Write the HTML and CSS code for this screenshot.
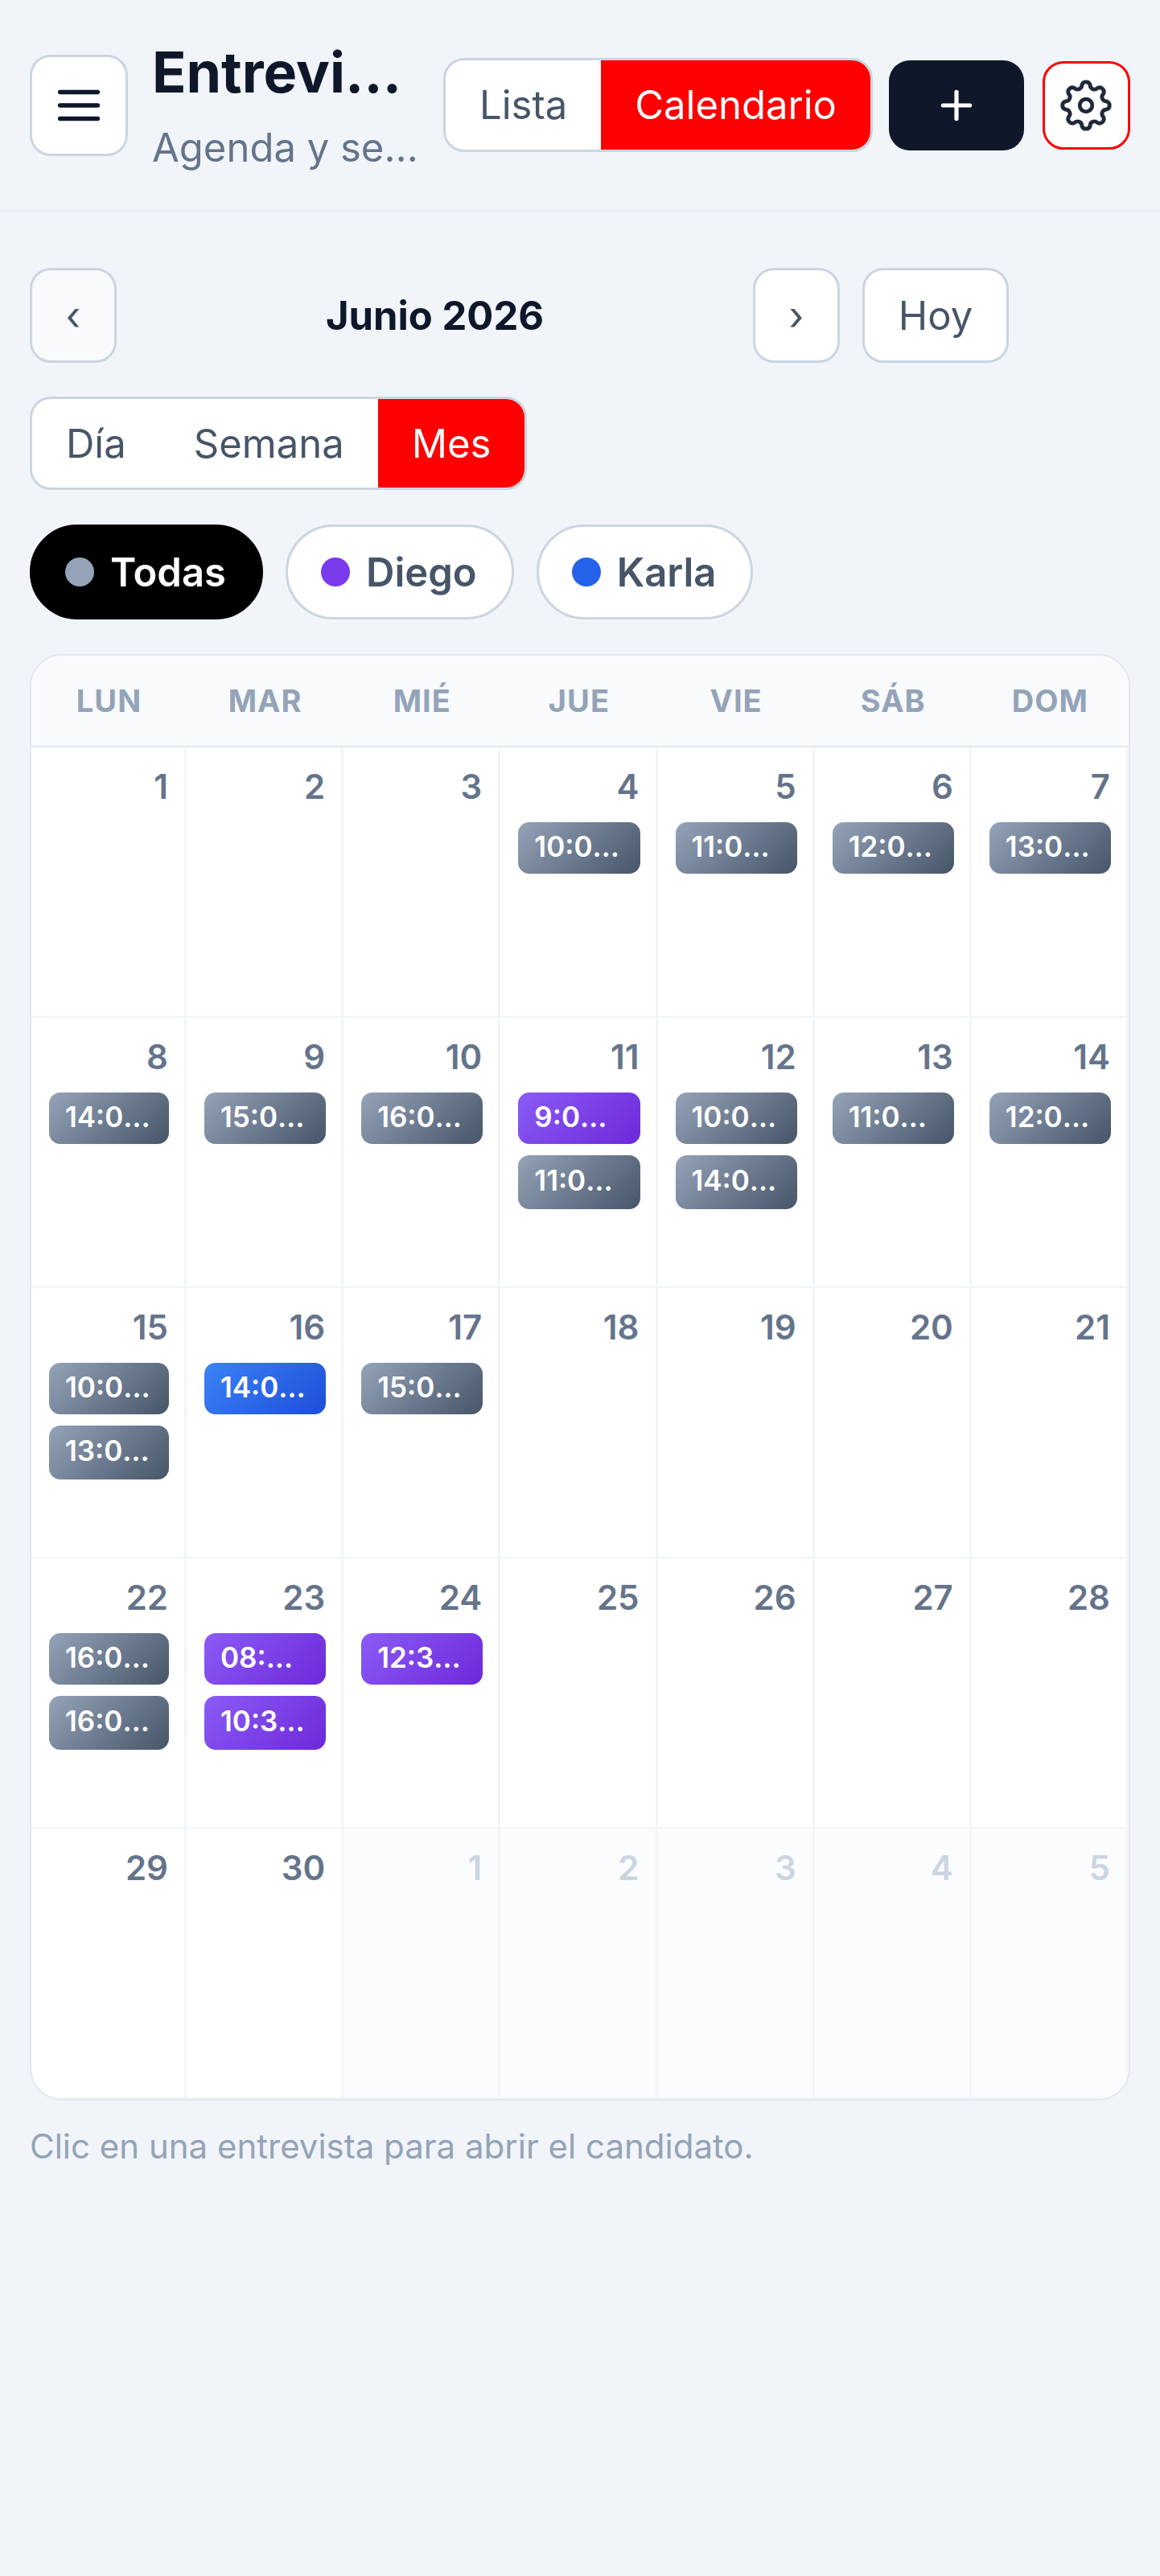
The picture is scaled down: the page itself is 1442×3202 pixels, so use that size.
FILE: index.html
```
<!DOCTYPE html>
<html lang="es">
<head>
<meta charset="utf-8">
<title>Entrevistas</title>
<link rel="stylesheet" href="styles.css">
</head>
<body>
<header class="topbar">
  <button class="menu-btn" aria-label="Menú">
    <svg class="menu-icon" viewBox="0 0 24 24"><path d="M3.5 6h17M3.5 12h17M3.5 18h17"/></svg>
  </button>
  <div class="title-col">
    <h1 class="title">Entrevistas</h1>
    <p class="subtitle">Agenda y seguimiento</p>
  </div>
  <div class="seg seg-top">
    <span class="seg-item">Lista</span>
    <span class="seg-item active">Calendario</span>
  </div>
  <button class="add-btn" aria-label="Añadir">
    <svg class="plus-icon" viewBox="0 0 24 24"><path d="M12 3.7v16.6M3.7 12h16.6"/></svg>
  </button>
  <button class="gear-btn" aria-label="Ajustes">
    <svg class="gear-icon" viewBox="0 0 24 24"><path d="M10.3 3.47A1.8 1.8 0 0 1 13.7 3.47A1.8 1.8 0 0 0 16.83 4.77A1.8 1.8 0 0 1 19.23 7.17A1.8 1.8 0 0 0 20.53 10.3A1.8 1.8 0 0 1 20.53 13.7A1.8 1.8 0 0 0 19.23 16.83A1.8 1.8 0 0 1 16.83 19.23A1.8 1.8 0 0 0 13.7 20.53A1.8 1.8 0 0 1 10.3 20.53A1.8 1.8 0 0 0 7.17 19.23A1.8 1.8 0 0 1 4.77 16.83A1.8 1.8 0 0 0 3.47 13.7A1.8 1.8 0 0 1 3.47 10.3A1.8 1.8 0 0 0 4.77 7.17A1.8 1.8 0 0 1 7.17 4.77A1.8 1.8 0 0 0 10.3 3.47Z"/><circle cx="12" cy="12" r="2.6"/></svg>
  </button>
</header>
<main class="content">
  <div class="nav-row">
    <button class="nav-btn arrow prev">‹</button>
    <div class="month">Junio 2026</div>
    <button class="nav-btn arrow">›</button>
    <button class="nav-btn today">Hoy</button>
  </div>
  <div class="seg seg-view">
    <span class="seg-item">Día</span>
    <span class="seg-item">Semana</span>
    <span class="seg-item active">Mes</span>
  </div>
  <div class="chips">
    <span class="chip chip-on"><i class="dot dot-all"></i>Todas</span>
    <span class="chip"><i class="dot dot-diego"></i>Diego</span>
    <span class="chip"><i class="dot dot-karla"></i>Karla</span>
  </div>
  <section class="calendar">
    <div class="weekdays">
      <div>LUN</div><div>MAR</div><div>MIÉ</div><div>JUE</div><div>VIE</div><div>SÁB</div><div>DOM</div>
    </div>
    <div class="days">
      <div class="day"><div class="num">1</div></div>
      <div class="day"><div class="num">2</div></div>
      <div class="day"><div class="num">3</div></div>
      <div class="day"><div class="num">4</div><a class="ev ev-gray">10:00 Entrevista</a></div>
      <div class="day"><div class="num">5</div><a class="ev ev-gray">11:00 Entrevista</a></div>
      <div class="day"><div class="num">6</div><a class="ev ev-gray">12:00 Entrevista</a></div>
      <div class="day"><div class="num">7</div><a class="ev ev-gray">13:00 Entrevista</a></div>

      <div class="day"><div class="num">8</div><a class="ev ev-gray">14:00 Entrevista</a></div>
      <div class="day"><div class="num">9</div><a class="ev ev-gray">15:00 Entrevista</a></div>
      <div class="day"><div class="num">10</div><a class="ev ev-gray">16:00 Entrevista</a></div>
      <div class="day"><div class="num">11</div><a class="ev ev-purple">9:00 Entrevista</a><a class="ev ev-gray">11:00 Entrevista</a></div>
      <div class="day"><div class="num">12</div><a class="ev ev-gray">10:00 Entrevista</a><a class="ev ev-gray">14:00 Entrevista</a></div>
      <div class="day"><div class="num">13</div><a class="ev ev-gray">11:00 Entrevista</a></div>
      <div class="day"><div class="num">14</div><a class="ev ev-gray">12:00 Entrevista</a></div>

      <div class="day"><div class="num">15</div><a class="ev ev-gray">10:00 Entrevista</a><a class="ev ev-gray">13:00 Entrevista</a></div>
      <div class="day"><div class="num">16</div><a class="ev ev-blue">14:00 Entrevista</a></div>
      <div class="day"><div class="num">17</div><a class="ev ev-gray">15:00 Entrevista</a></div>
      <div class="day"><div class="num">18</div></div>
      <div class="day"><div class="num">19</div></div>
      <div class="day"><div class="num">20</div></div>
      <div class="day"><div class="num">21</div></div>

      <div class="day"><div class="num">22</div><a class="ev ev-gray">16:00 Entrevista</a><a class="ev ev-gray">16:00 Entrevista</a></div>
      <div class="day"><div class="num">23</div><a class="ev ev-purple">08:00 Entrevista</a><a class="ev ev-purple">10:30 Entrevista</a></div>
      <div class="day"><div class="num">24</div><a class="ev ev-purple">12:30 Entrevista</a></div>
      <div class="day"><div class="num">25</div></div>
      <div class="day"><div class="num">26</div></div>
      <div class="day"><div class="num">27</div></div>
      <div class="day"><div class="num">28</div></div>

      <div class="day"><div class="num">29</div></div>
      <div class="day"><div class="num">30</div></div>
      <div class="day out"><div class="num">1</div></div>
      <div class="day out"><div class="num">2</div></div>
      <div class="day out"><div class="num">3</div></div>
      <div class="day out"><div class="num">4</div></div>
      <div class="day out"><div class="num">5</div></div>
    </div>
  </section>
  <p class="hint">Clic en una entrevista para abrir el candidato.</p>
</main>
</body>
</html>
```
FILE: styles.css
```
* { box-sizing: border-box; }
html, body { margin: 0; padding: 0; }
body {
  width: 1442px;
  min-height: 3202px;
  background: #f1f5f9;
  font-family: Inter, "Liberation Sans", sans-serif;
  color: #0f172a;
}
button { font-family: inherit; margin: 0; padding: 0; cursor: pointer; }

.topbar {
  display: flex;
  align-items: center;
  gap: 28px;
  height: 263px;
  padding: 0 36px 0 37px;
  border-bottom: 2px solid #e9eef5;
}
.menu-btn {
  flex: none;
  width: 122px;
  height: 126px;
  background: #fff;
  border: 3px solid #cbd5e1;
  border-radius: 26px;
  display: flex;
  align-items: center;
  justify-content: center;
}
.menu-icon { width: 66px; height: 66px; fill: none; stroke: #0f172a; stroke-width: 2; stroke-linecap: round; }
.title-col { flex: none; width: 334px; margin-left: 2px; }
.title {
  margin: 0;
  font-size: 70px;
  line-height: 84px;
  font-weight: 700;
  overflow: hidden;
  white-space: nowrap;
  text-overflow: ellipsis;
}
.subtitle {
  margin: 23px 0 0;
  font-size: 49px;
  line-height: 58px;
  color: #64748b;
  overflow: hidden;
  white-space: nowrap;
  text-overflow: ellipsis;
}
.seg {
  display: flex;
  width: fit-content;
  background: #fff;
  border: 3px solid #cbd5e1;
  border-radius: 26px;
  overflow: hidden;
}
.seg-item {
  display: flex;
  align-items: center;
  font-size: 49px;
  color: #475569;
}
.seg-item.active { background: #f00; color: #fff; }
.seg-top { flex: none; height: 117px; }
.seg-top .seg-item { padding: 0 42px; }
.add-btn {
  flex: none;
  width: 168px;
  height: 112px;
  margin-left: -8px;
  background: #0f172a;
  border: 0;
  border-radius: 26px;
  display: flex;
  align-items: center;
  justify-content: center;
}
.plus-icon { width: 48px; height: 48px; fill: none; stroke: #fff; stroke-width: 2.6; stroke-linecap: round; }
.gear-btn {
  flex: none;
  width: 109px;
  height: 110px;
  margin-left: -5px;
  background: #fff;
  border: 3px solid #f00;
  border-radius: 26px;
  display: flex;
  align-items: center;
  justify-content: center;
}
.gear-icon { width: 72px; height: 72px; fill: none; stroke: #1e293b; stroke-width: 1.6; stroke-linecap: round; stroke-linejoin: round; }

.content { padding: 70px 37px 0; }
.nav-row { display: flex; align-items: center; gap: 28px; width: 1217px; }
.nav-btn {
  flex: none;
  height: 118px;
  background: #fff;
  border: 3px solid #cbd5e1;
  border-radius: 26px;
  font-size: 49px;
  color: #475569;
}
.nav-btn.prev { background: #f8fafc; }
.nav-btn.arrow { width: 108px; }
.nav-btn.today { width: 182px; }
.month { flex: 1; text-align: center; font-size: 49px; font-weight: 700; }
.seg-view { height: 116px; margin-top: 42px; }
.seg-view .seg-item { padding: 0 42px; }
.chips { display: flex; gap: 28px; margin-top: 43px; }
.chip {
  display: inline-flex;
  align-items: center;
  gap: 20px;
  height: 118px;
  padding: 0 43px 0 41px;
  background: #fff;
  border: 3px solid #cbd5e1;
  border-radius: 59px;
  font-size: 49px;
  font-weight: 600;
  color: #475569;
}
.chip-on { background: #000; border-color: #000; color: #fff; }
.dot { width: 36px; height: 36px; border-radius: 50%; display: block; }
.dot-all { background: #94a3b8; }
.dot-diego { background: #7c3aed; }
.dot-karla { background: #2563eb; }

.calendar {
  margin-top: 43px;
  background: #fff;
  border: 2px solid #e2e8f0;
  border-radius: 40px;
  overflow: hidden;
}
.weekdays {
  display: grid;
  grid-template-columns: 193px repeat(6, 1fr);
  height: 114px;
  background: #f8fafc;
  border-bottom: 2px solid #e2e8f0;
}
.weekdays div {
  display: flex;
  align-items: center;
  justify-content: center;
  font-size: 38px;
  font-weight: 700;
  letter-spacing: 1px;
  color: #94a3b8;
}
.days { display: grid; grid-template-columns: 193px repeat(6, 1fr); grid-auto-rows: 336px; }
.day {
  min-width: 0;
  padding: 21px 19px 20px 22px;
  border-right: 3px solid #f1f5f9;
  border-bottom: 2px solid #f1f5f9;
  display: flex;
  flex-direction: column;
}
.day.out { background: #fbfcfe; }
.num {
  text-align: right;
  font-size: 42px;
  line-height: 56px;
  font-weight: 600;
  color: #64748b;
  padding-right: 1px;
  margin-bottom: 16px;
}
.out .num { color: #cbd5e1; }
.ev {
  display: block;
  flex: none;
  height: 64px;
  line-height: 60px;
  padding: 0 20px;
  margin-bottom: 14px;
  border-radius: 14px;
  font-size: 35px;
  font-weight: 600;
  color: #fff;
  white-space: nowrap;
  overflow: hidden;
  text-overflow: ellipsis;
}
.ev + .ev { height: 67px; line-height: 63px; }
.ev-gray { background: linear-gradient(135deg, #94a3b8, #475569); }
.ev-purple { background: linear-gradient(135deg, #8b5cf6, #6d28d9); }
.ev-blue { background: linear-gradient(135deg, #3b82f6, #1d4ed8); }
.hint { margin: 33px 0 0; font-size: 42px; line-height: 48px; color: #94a3b8; }
```
